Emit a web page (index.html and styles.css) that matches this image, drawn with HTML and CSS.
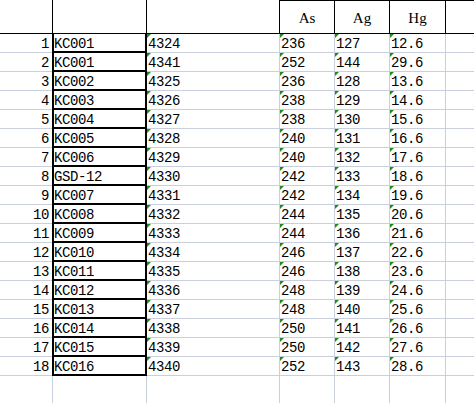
FILE: index.html
```html
<!DOCTYPE html>
<html>
<head>
<meta charset="utf-8">
<link rel="stylesheet" href="styles.css">
</head>
<body>
<div class="sheet">
  <div class="h h0"></div><div class="h h1"></div><div class="h h2"></div><div class="h hc">As</div><div class="h hc">Ag</div><div class="h hc">Hg</div><div class="h hl"></div>

  <div class="c n">1</div><div class="c k">KC001</div><div class="c v">4324</div><div class="c v">236</div><div class="c v">127</div><div class="c v">12.6</div><div class="c e"></div>
  <div class="c n">2</div><div class="c k">KC001</div><div class="c v">4341</div><div class="c v">252</div><div class="c v">144</div><div class="c v">29.6</div><div class="c e"></div>
  <div class="c n">3</div><div class="c k">KC002</div><div class="c v">4325</div><div class="c v">236</div><div class="c v">128</div><div class="c v">13.6</div><div class="c e"></div>
  <div class="c n">4</div><div class="c k">KC003</div><div class="c v">4326</div><div class="c v">238</div><div class="c v">129</div><div class="c v">14.6</div><div class="c e"></div>
  <div class="c n">5</div><div class="c k">KC004</div><div class="c v">4327</div><div class="c v">238</div><div class="c v">130</div><div class="c v">15.6</div><div class="c e"></div>
  <div class="c n">6</div><div class="c k">KC005</div><div class="c v">4328</div><div class="c v">240</div><div class="c v">131</div><div class="c v">16.6</div><div class="c e"></div>
  <div class="c n">7</div><div class="c k">KC006</div><div class="c v">4329</div><div class="c v">240</div><div class="c v">132</div><div class="c v">17.6</div><div class="c e"></div>
  <div class="c n">8</div><div class="c k">GSD-12</div><div class="c v">4330</div><div class="c v">242</div><div class="c v">133</div><div class="c v">18.6</div><div class="c e"></div>
  <div class="c n">9</div><div class="c k">KC007</div><div class="c v">4331</div><div class="c v">242</div><div class="c v">134</div><div class="c v">19.6</div><div class="c e"></div>
  <div class="c n">10</div><div class="c k">KC008</div><div class="c v">4332</div><div class="c v">244</div><div class="c v">135</div><div class="c v">20.6</div><div class="c e"></div>
  <div class="c n">11</div><div class="c k">KC009</div><div class="c v">4333</div><div class="c v">244</div><div class="c v">136</div><div class="c v">21.6</div><div class="c e"></div>
  <div class="c n">12</div><div class="c k">KC010</div><div class="c v">4334</div><div class="c v">246</div><div class="c v">137</div><div class="c v">22.6</div><div class="c e"></div>
  <div class="c n">13</div><div class="c k">KC011</div><div class="c v">4335</div><div class="c v">246</div><div class="c v">138</div><div class="c v">23.6</div><div class="c e"></div>
  <div class="c n">14</div><div class="c k">KC012</div><div class="c v">4336</div><div class="c v">248</div><div class="c v">139</div><div class="c v">24.6</div><div class="c e"></div>
  <div class="c n">15</div><div class="c k">KC013</div><div class="c v">4337</div><div class="c v">248</div><div class="c v">140</div><div class="c v">25.6</div><div class="c e"></div>
  <div class="c n">16</div><div class="c k">KC014</div><div class="c v">4338</div><div class="c v">250</div><div class="c v">141</div><div class="c v">26.6</div><div class="c e"></div>
  <div class="c n">17</div><div class="c k">KC015</div><div class="c v">4339</div><div class="c v">250</div><div class="c v">142</div><div class="c v">27.6</div><div class="c e"></div>
  <div class="c n">18</div><div class="c k">KC016</div><div class="c v">4340</div><div class="c v">252</div><div class="c v">143</div><div class="c v">28.6</div><div class="c e"></div>

  <div class="f"></div><div class="f f1"></div><div class="f fr"></div><div class="f fr"></div><div class="f fr"></div><div class="f fr"></div><div class="f"></div>
</div>
</body>
</html>
```

FILE: styles.css
```css
html, body {
  margin: 0;
  padding: 0;
  background: #fff;
}

.sheet {
  display: grid;
  grid-template-columns: 52px 95px 133px 55px 55px 56px 1fr;
  grid-template-rows: 34px repeat(18, 19px) 1fr;
  width: 474px;
  height: 403px;
  overflow: hidden;
  font-family: "Liberation Mono", monospace;
  font-size: 14px;
  color: #000;
}

.sheet > div {
  box-sizing: border-box;
  min-width: 0;
}

/* header row */
.h {
  border-bottom: 1px solid #000;
  font-family: "Liberation Serif", serif;
  font-size: 15px;
  line-height: 33px;
  padding-top: 1px;
  text-align: center;
}
.h1 {
  border-left: 1px solid #000;
  border-right: 1px solid #000;
}
.h2 {
  border-right: 1px solid #000;
}
.hc {
  border-top: 1px solid #000;
  border-right: 1px solid #000;
  line-height: 32px;
}
.hl {
  border-top: 1px solid #000;
}

/* data cells */
.c {
  border-bottom: 1px solid #c9cfdd;
  line-height: 15px;
  padding-top: 3px;
  padding-left: 1px;
  white-space: nowrap;
  letter-spacing: -0.4px;
}
.n {
  text-align: right;
  padding-right: 3px;
  padding-left: 0;
}
.k {
  border-left: 2px solid #000;
  border-right: 2px solid #000;
  border-bottom: 2px solid #000;
  padding-left: 0;
}
.v {
  position: relative;
  border-right: 1px solid #c9cfdd;
}
.v::before {
  content: "";
  position: absolute;
  left: 0;
  top: 0;
  width: 0;
  height: 0;
  border-top: 4px solid #1d8c1d;
  border-right: 4px solid transparent;
}

/* filler below data */
.f1 {
  border-left: 1px solid #c9cfdd;
  border-right: 1px solid #c9cfdd;
}
.fr {
  border-right: 1px solid #c9cfdd;
}
```
